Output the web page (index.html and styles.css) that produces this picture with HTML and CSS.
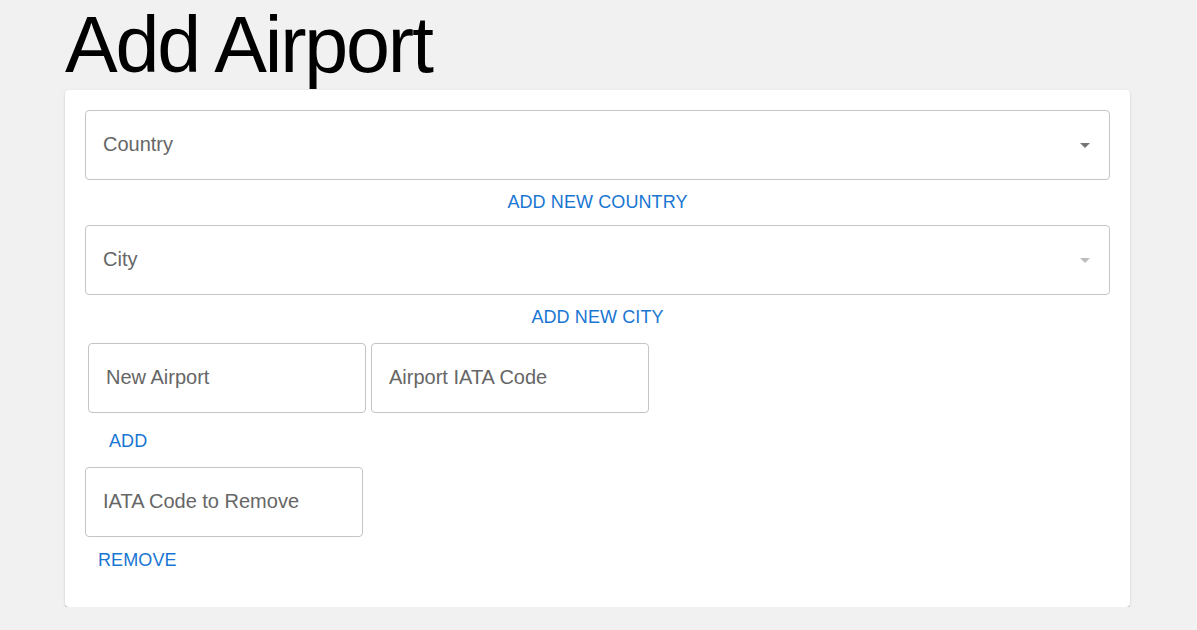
FILE: index.html
```html
<!DOCTYPE html>
<html lang="en">
<head>
<meta charset="utf-8">
<title>Add Airport</title>
<link rel="stylesheet" href="styles.css">
</head>
<body>
<div class="page">
  <h1 class="title">Add Airport</h1>
  <div class="card">
    <div class="field field-full">
      <span class="label">Country</span>
      <svg class="arrow" viewBox="0 0 24 24" width="24" height="24"><path d="M7 10l5 5 5-5z" fill="#757575"/></svg>
    </div>
    <div class="btn-row btn-row-1"><span class="btn">ADD NEW COUNTRY</span></div>
    <div class="field field-full">
      <span class="label">City</span>
      <svg class="arrow" viewBox="0 0 24 24" width="24" height="24"><path d="M7 10l5 5 5-5z" fill="#bdbdbd"/></svg>
    </div>
    <div class="btn-row btn-row-2"><span class="btn">ADD NEW CITY</span></div>
    <div class="airport-row">
      <div class="field field-small field-airport"><span class="label">New Airport</span></div>
      <div class="field field-small"><span class="label">Airport IATA Code</span></div>
    </div>
    <div class="btn-row btn-row-add"><span class="btn">ADD</span></div>
    <div class="field field-small"><span class="label">IATA Code to Remove</span></div>
    <div class="btn-row btn-row-remove"><span class="btn">REMOVE</span></div>
  </div>
</div>
</body>
</html>
```

FILE: styles.css
```css
html, body {
  margin: 0;
  padding: 0;
  background: #f1f1f1;
  font-family: "Liberation Sans", Arial, sans-serif;
}

.page {
  width: 1065px;
  padding-left: 65px;
}

.title {
  margin: 0;
  font-weight: 400;
  font-size: 79px;
  letter-spacing: -2.2px;
  line-height: 90px;
  color: #000;
}

.card {
  background: #fff;
  border-radius: 4px;
  box-shadow: 0 2px 1px -1px rgba(0,0,0,0.2), 0 1px 1px 0 rgba(0,0,0,0.14), 0 1px 3px 0 rgba(0,0,0,0.12);
  padding: 20px 20px 0 20px;
  height: 517px;
  box-sizing: border-box;
}

.field {
  box-sizing: border-box;
  height: 70px;
  border: 1px solid #c4c4c4;
  border-radius: 4px;
  display: flex;
  align-items: center;
  justify-content: space-between;
  padding: 0 12px 2px 17px;
}

.field-small {
  width: 278px;
}

.label {
  font-size: 20px;
  color: #666;
}

.arrow {
  display: block;
  margin-top: 2px;
}

.btn-row {
  display: flex;
}

.btn {
  font-size: 18px;
  line-height: 22px;
  color: #1976d2;
  letter-spacing: 0.1px;
}

.btn-row-1 {
  justify-content: center;
  padding: 11px 0 12px;
}

.btn-row-2 {
  justify-content: center;
  padding: 11px 0 15px;
}

.airport-row {
  display: flex;
  gap: 5px;
  padding-left: 3px;
}

.btn-row-add {
  padding: 17px 0 15px 24px;
}

.btn-row-remove {
  padding: 12px 0 0 13px;
}
```
